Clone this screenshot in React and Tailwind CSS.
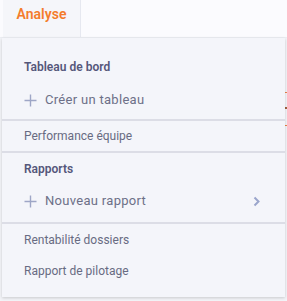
import React from "react";

const Plus = () => (
  <svg width="13" height="13" viewBox="0 0 13 13" className="shrink-0">
    <path d="M6.5 0.5V12.5M0.5 6.5H12.5" stroke="#9ea6c6" strokeWidth="1.4" fill="none" />
  </svg>
);

const Chevron = () => (
  <svg width="9" height="11" viewBox="0 0 9 11" className="shrink-0">
    <path d="M2.5 1.5L6.5 5.5L2.5 9.5" stroke="#9aa5cb" strokeWidth="2" fill="none" />
  </svg>
);

export default function App() {
  const font = { fontFamily: "Roboto, 'Noto Sans', sans-serif" };
  return (
    <div className="relative w-[287px] h-[301px] overflow-hidden bg-[#f3f4f8]" style={font}>
      <div className="flex h-[38px] bg-[#fbfbfe] border-b border-[#eceef3]">
        <div className="ml-[3px] w-[78px] flex items-center justify-center bg-[#f5f6fa] border-r border-[#e6e8f0] pb-[8px]">
          <span className="text-[14px] font-semibold text-[#f47c2c]">Analyse</span>
        </div>
      </div>
      <div className="absolute left-[285px] top-[92px] w-[2px] h-[1px] bg-[#e9814a]" />
      <div className="absolute left-[285px] top-[107px] w-[2px] h-[2px] bg-[#a06040]" />
      <div className="absolute left-[285px] top-[125px] w-[2px] h-[1px] bg-[#e9814a]" />
      <div className="absolute left-[2px] top-[38px] w-[283px] h-[259px] bg-[#f4f5fa] shadow-[0_1px_3px_rgba(0,0,0,0.18)] flex flex-col">
        <div className="h-[16px]" />
        <div className="h-[26px] flex items-center px-[22px] text-[12px] font-semibold text-[#55577a]">Tableau de bord</div>
        <div className="h-[4px]" />
        <div className="h-[32px] flex items-center px-[22px] gap-[8px] text-[13px] text-[#6d7088] tracking-[0.3px]">
          <Plus />
          <span>Créer un tableau</span>
        </div>
        <div className="h-[3px]" />
        <div className="border-t-2 border-[#dcdde6]" />
        <div className="h-[30px] flex items-center px-[22px] text-[12px] text-[#686b82]">Performance équipe</div>
        <div className="border-t-2 border-[#dcdde6]" />
        <div className="h-[30px] flex items-center px-[22px] text-[12px] font-semibold text-[#55577a] pt-[1px]">Rapports</div>
        <div className="h-[2px]" />
        <div className="h-[32px] flex items-center pl-[22px] pr-[24px] gap-[8px] text-[13px] text-[#6d7088] tracking-[0.3px]">
          <Plus />
          <span className="flex-1">Nouveau rapport</span>
          <Chevron />
        </div>
        <div className="h-[5px]" />
        <div className="border-t-2 border-[#dcdde6]" />
        <div className="h-[31px] flex items-center px-[22px] text-[12px] text-[#686b82]">Rentabilité dossiers</div>
        <div className="h-[31px] flex items-center px-[22px] text-[12px] text-[#686b82]">Rapport de pilotage</div>
      </div>
    </div>
  );
}
